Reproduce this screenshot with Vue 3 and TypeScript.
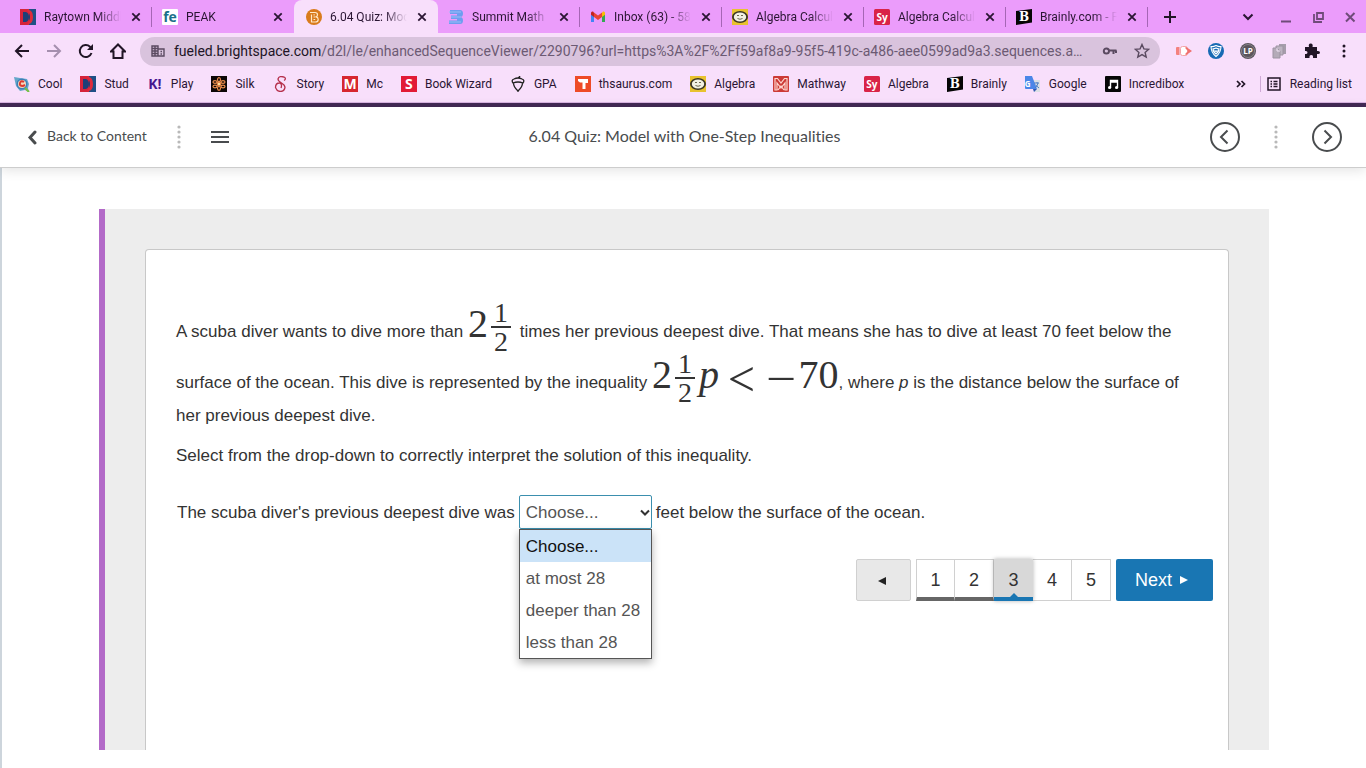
<script setup lang="ts">
import { ref } from 'vue'

interface Link {
  icon: string
  label: string
}

const tabs: Link[] = [
  { icon: 'raytown', label: 'Raytown Middle' },
  { icon: 'peak', label: 'PEAK' },
  { icon: 'beta', label: '6.04 Quiz: Model' },
  { icon: 'summit', label: 'Summit Math' },
  { icon: 'gmail', label: 'Inbox (63) - 58' },
  { icon: 'algebra', label: 'Algebra Calculator' },
  { icon: 'symbolab', label: 'Algebra Calculator' },
  { icon: 'brainly', label: 'Brainly.com - For' },
]
const activeTab = 2

const bookmarks: Link[] = [
  { icon: 'cool', label: 'Cool' },
  { icon: 'raytown', label: 'Stud' },
  { icon: 'kahoot', label: 'Play' },
  { icon: 'silk', label: 'Silk' },
  { icon: 'story', label: 'Story' },
  { icon: 'mc', label: 'Mc' },
  { icon: 'scholastic', label: 'Book Wizard' },
  { icon: 'acorn', label: 'GPA' },
  { icon: 'thesaurus', label: 'thsaurus.com' },
  { icon: 'algebra', label: 'Algebra' },
  { icon: 'mathway', label: 'Mathway' },
  { icon: 'symbolab', label: 'Algebra' },
  { icon: 'brainly', label: 'Brainly' },
  { icon: 'translate', label: 'Google' },
  { icon: 'music', label: 'Incredibox' },
]

const extensions = ['cast', 'shield', 'lp', 'copies', 'puzzle', 'kebab']

const monograms: Record<string, string> = {
  peak: 'fe',
  symbolab: 'Sy',
  brainly: 'B',
  kahoot: 'K!',
  mc: 'M',
  scholastic: 'S',
  translate: 'G',
  lp: 'LP',
}

const options = ['Choose...', 'at most 28', 'deeper than 28', 'less than 28']
const answer = ref(options[0])

const pages = [1, 2, 3, 4, 5]
const currentPage = ref(3)
</script>

<template>
  <div class="screen">
    <svg class="sprite" aria-hidden="true">
      <symbol id="raytown" viewBox="0 0 16 16">
        <rect width="16" height="16" fill="#d5233b" />
        <path d="M9 0h7v16H9z" fill="#1f4f86" />
        <path d="M3 3h3q3 1 3 5t-3 5H3z" fill="#1d3f78" />
        <path d="M7 1h2q4 1 4 7t-4 7H7l2-3V4z" fill="#df2a3c" />
        <path d="M9 4q2 4 0 8z" fill="#1d3f78" />
      </symbol>
      <symbol id="peak" viewBox="0 0 16 16">
        <rect width="16" height="16" rx="1" fill="#fff" />
      </symbol>
      <symbol id="beta" viewBox="0 0 16 16">
        <circle cx="8" cy="8" r="8" fill="#d97b1c" />
        <path d="M4 3.500h5q2.500 0 2.500 2.200 0 1.500-1.300 2.200 2 .5 2 2.500 0 2.600-3 2.600H5.500V5.500M7.500 5.800h1.200M7.500 8h1.500M7.500 10.500h1.700" fill="none" stroke="#ffe9c8" stroke-width="1.200" />
      </symbol>
      <symbol id="summit" viewBox="0 0 16 16">
        <path d="M2 1h10q3 0 3 3.500T12 8q3 0 3 3.500T12 15H1v-3.500h8V10H3V6.500h6V5H2z" fill="#6f9df0" />
        <path d="M1 3h12M3 8h10M1 13h12" stroke="#9abcf8" stroke-width="1" />
      </symbol>
      <symbol id="gmail" viewBox="0 0 16 16">
        <path d="M1 4v9h3V7z" fill="#4285f4" />
        <path d="M12 7v6h3V4z" fill="#34a853" />
        <path d="M1 4q0-2 2-1.500L4 3.500V8L1 5.800z" fill="#c5221f" />
        <path d="M15 4q0-2-2-1.500l-1 1V8l3-2.200z" fill="#fbbc04" />
        <path d="M4 3.500l4 3 4-3V8l-4 3-4-3z" fill="#ea4335" />
      </symbol>
      <symbol id="algebra" viewBox="0 0 16 16">
        <rect width="16" height="16" fill="#e8c22f" />
        <ellipse cx="8" cy="8" rx="8" ry="6" fill="#3a3523" />
        <ellipse cx="8" cy="8" rx="6.200" ry="4.600" fill="#f2f0e2" />
        <path d="M5 6.500h2M9 6.500h2M5.500 9.500q2.500 1.500 5 0" fill="none" stroke="#6d6850" stroke-width="1" />
      </symbol>
      <symbol id="symbolab" viewBox="0 0 16 16">
        <rect width="16" height="16" rx="1.500" fill="#d92347" />
      </symbol>
      <symbol id="brainly" viewBox="0 0 16 16">
        <path d="M0 2L16 0v13.500L0 16z" fill="#050505" />
      </symbol>
      <symbol id="cool" viewBox="0 0 16 16">
        <path d="M0 1l6 1 7 1 2 5-1 4 1 4-4-2-5 1-4-5z" fill="#64a7c9" />
        <circle cx="8" cy="8" r="5.500" fill="#3f7fb8" />
        <circle cx="8" cy="8" r="4" fill="#f3d8be" />
        <path d="M10 6q-3-2-4 1t3 3l2-1" fill="none" stroke="#dd3b30" stroke-width="2" />
        <path d="M11 12l4 4" stroke="#78c043" stroke-width="2" />
      </symbol>
      <symbol id="kahoot" viewBox="0 0 16 16" />
      <symbol id="silk" viewBox="0 0 16 16">
        <rect width="16" height="16" fill="#0d0706" />
        <g fill="none" stroke="#e88a4b" stroke-width="1.200">
          <circle cx="8" cy="8" r="1.800" fill="#ffe0a0" />
          <ellipse cx="8" cy="3.700" rx="1.500" ry="2" />
          <ellipse cx="8" cy="12.300" rx="1.500" ry="2" />
          <ellipse cx="4" cy="6" rx="2" ry="1.300" />
          <ellipse cx="12" cy="6" rx="2" ry="1.300" />
          <ellipse cx="4" cy="10.500" rx="2" ry="1.300" />
          <ellipse cx="12" cy="10.500" rx="2" ry="1.300" />
        </g>
      </symbol>
      <symbol id="story" viewBox="0 0 16 16">
        <path d="M12 1.500Q6-1 5 3q0 2 3.500 4t3.500 4.500Q11 15.500 7.500 15.500T2.500 11.500q0-4.500 4-4.500 3 1 1.500 5M12 1.500q1 2-1 3" fill="none" stroke="#b5304c" stroke-width="1.300" />
      </symbol>
      <symbol id="mc" viewBox="0 0 16 16">
        <rect width="16" height="16" fill="#d7262f" />
      </symbol>
      <symbol id="scholastic" viewBox="0 0 16 16">
        <rect width="16" height="16" fill="#e21b36" />
      </symbol>
      <symbol id="acorn" viewBox="0 0 16 16">
        <path d="M3 7q-2-3 1-4 4-2 8 0 3 1 1 4-5-2-10 0zM3.500 7q0 4 4.500 8 4.500-4 4.500-8M8 2.500L10 0M8 15v1" fill="none" stroke="#222" stroke-width="1.300" />
      </symbol>
      <symbol id="thesaurus" viewBox="0 0 16 16">
        <rect width="16" height="16" fill="#ee4b27" />
        <path d="M3 3h10v4h-2.500v6h-3V6.500H5L3 5z" fill="#fff" />
      </symbol>
      <symbol id="mathway" viewBox="0 0 16 16">
        <rect width="16" height="16" rx="1" fill="#cc3a36" />
        <path d="M2 14V2.500h2.500L8 7l3.500-4.500H14V14h-2V7l-4 5-4-5v7zM5 14l3-4 3 4" fill="none" stroke="#ffd5cf" stroke-width="1.200" />
      </symbol>
      <symbol id="translate" viewBox="0 0 16 16">
        <path d="M6 4h9v12H9z" fill="#dcdfe5" />
        <path d="M0 0h7l5 13H1q-1 0-1-1z" fill="#4a86e8" />
        <path d="M8 13h4l-3 3z" fill="#3058b0" />
        <path d="M9 7h5M12 6v1M13 7q-1 4-3 5M10.500 9l3.500 3" fill="none" stroke="#4a7fc4" stroke-width="1" />
      </symbol>
      <symbol id="music" viewBox="0 0 16 16">
        <rect width="16" height="16" rx="1" fill="#050505" />
        <path d="M5.500 11.500V4.500h7v7M5.500 6h7" fill="none" stroke="#fff" stroke-width="1.400" />
        <circle cx="4.600" cy="11.500" r="1.600" fill="#fff" />
        <circle cx="11.600" cy="11.500" r="1.600" fill="#fff" />
      </symbol>
      <symbol id="cast" viewBox="0 0 16 16">
        <path d="M0 5q0-1 1-1h2.500v8H1q-1 0-1-1z" fill="#f4817e" />
        <rect x="4.500" y="3.500" width="7" height="9" rx="2" fill="#fff" stroke="#f4a5a8" stroke-width="1" />
        <path d="M9.500 3.500L16 8l-6.500 4.500v-2L12 8 9.500 5.500z" fill="#f0716e" />
      </symbol>
      <symbol id="shield" viewBox="0 0 16 16">
        <circle cx="8" cy="8" r="8" fill="#176ab4" />
        <path d="M8 2.500q3 1.500 5 1 0 6-5 10-5-4-5-10 2 .5 5-1zM8 5q2 1 3 .8 0 3.200-3 5.200-3-2-3-5.200Q6 6 8 5zM6.500 7.500l1.500 1 1.500-1" fill="none" stroke="#fff" stroke-width="1.100" />
      </symbol>
      <symbol id="lp" viewBox="0 0 16 16">
        <circle cx="8" cy="8" r="8" fill="#5b555c" />
        <circle cx="8" cy="8" r="6.500" fill="none" stroke="#89838a" stroke-width="1" />
      </symbol>
      <symbol id="copies" viewBox="0 0 16 16">
        <path d="M7 1h7v10H7z" fill="#a69dab" />
        <path d="M4 3h7v9H4z" fill="#bdb4c1" stroke="#9d94a2" />
        <path d="M1 5h4l3 3v7H1z" fill="#b4abb8" stroke="#9d94a2" />
        <path d="M5 5v3h3" fill="none" stroke="#efe3f3" />
      </symbol>
      <symbol id="puzzle" viewBox="0 0 16 16">
        <path d="M1 4h4q-1-3.500 1.700-3.500T8.500 4H13v4q3-.5 3 1.500T13 11v4H9q.5-3-1.700-3T5.500 15H1v-4q2.500.3 2.500-1.600T1 8z" fill="#211526" />
      </symbol>
      <symbol id="kebab" viewBox="0 0 16 16">
        <circle cx="8" cy="3" r="1.500" fill="#211526" />
        <circle cx="8" cy="8" r="1.500" fill="#211526" />
        <circle cx="8" cy="13" r="1.500" fill="#211526" />
      </symbol>
      <symbol id="close" viewBox="0 0 16 16">
        <path d="M4.300 4.300l7.400 7.400M11.700 4.300l-7.400 7.400" stroke="#2a1533" stroke-width="1.800" />
      </symbol>
      <symbol id="dots" viewBox="0 0 4 24">
        <g fill="#b9b9b9">
          <circle cx="2" cy="2" r="1.600" /><circle cx="2" cy="7" r="1.600" /><circle cx="2" cy="12" r="1.600" /><circle cx="2" cy="17" r="1.600" /><circle cx="2" cy="22" r="1.600" />
        </g>
      </symbol>
    </svg>

    <header class="browser">
      <div class="tabstrip">
        <div v-for="(tab, i) in tabs" :key="i" class="tab" :class="{ active: i === activeTab, bare: i === activeTab - 1 || i === activeTab }">
          <span class="badge" :class="tab.icon"><svg class="icon"><use :href="'#' + tab.icon" /></svg><b v-if="monograms[tab.icon]">{{ monograms[tab.icon] }}</b></span>
          <span class="tab-title">{{ tab.label }}</span>
          <button class="plain" type="button" aria-label="Close tab"><svg class="icon"><use href="#close" /></svg></button>
        </div>
        <button class="plain new-tab" type="button" aria-label="New tab">
          <svg class="icon" viewBox="0 0 16 16"><path d="M8 2v12M2 8h12" stroke="#211526" stroke-width="2" /></svg>
        </button>
        <div class="window-controls">
          <button class="plain" type="button" aria-label="Search tabs"><svg class="icon" viewBox="0 0 16 16"><path d="M3.500 5.500L8 10l4.500-4.500" fill="none" stroke="#2a1533" stroke-width="2" /></svg></button>
          <button class="plain" type="button" aria-label="Minimize"><svg class="icon" viewBox="0 0 16 16"><path d="M3 12.500h10" stroke="#6f4b79" stroke-width="2" /></svg></button>
          <button class="plain" type="button" aria-label="Restore"><svg class="icon" viewBox="0 0 16 16"><path d="M7 4h6v6H7zM4 5v8h8" fill="none" stroke="#6f4b79" stroke-width="1.800" /></svg></button>
          <button class="plain" type="button" aria-label="Close"><svg class="icon" viewBox="0 0 16 16"><path d="M4 4l8.500 8.500M12.500 4L4 12.500" stroke="#6f4b79" stroke-width="2" /></svg></button>
        </div>
      </div>

      <div class="toolbar">
        <button class="plain" type="button" aria-label="Back"><svg class="icon" viewBox="0 0 16 16"><path d="M15 8H2M8 2L2 8l6 6" fill="none" stroke="#211526" stroke-width="2" /></svg></button>
        <button class="plain" type="button" aria-label="Forward"><svg class="icon" viewBox="0 0 16 16"><path d="M1 8h13M8 2l6 6-6 6" fill="none" stroke="#a58fae" stroke-width="2" /></svg></button>
        <button class="plain" type="button" aria-label="Reload"><svg class="icon" viewBox="0 0 16 16"><path d="M13.500 10A6 6 0 1 1 12 3.700L13.500 5" fill="none" stroke="#211526" stroke-width="2" /><path d="M15 1v6H9z" fill="#211526" /></svg></button>
        <button class="plain" type="button" aria-label="Home"><svg class="icon" viewBox="0 0 16 16"><path d="M1 8.500L8 1.500l7 7h-2.500V15h-9V8.500z" fill="none" stroke="#211526" stroke-width="2" /></svg></button>
        <div class="address">
          <svg class="icon" viewBox="0 0 16 16"><path d="M2 3h6v10H2zM8 6h6v7H8zM2 5.500h6M2 8h6M2 10.500h6M5 3v10M10.500 8.500h1.500M10.500 11h1.500" fill="none" stroke="#5a4a60" stroke-width="1.400" /></svg>
          <span class="url"><b>fueled.brightspace.com</b>/d2l/le/enhancedSequenceViewer/2290796?url=https%3A%2F%2Ff59af8a9-95f5-419c-a486-aee0599ad9a3.sequences.api.brightspace.com</span>
          <svg class="icon" viewBox="0 0 16 16"><path d="M1.800 8a2.600 2.600 0 1 0 5.200 0 2.600 2.600 0 1 0-5.200 0M7 7.500h7.500M11.500 7.500v3.500M14 7.500V10" fill="none" stroke="#5a4a60" stroke-width="2" /></svg>
          <svg class="icon" viewBox="0 0 16 16"><path d="M8 1.500l1.900 4.400 4.800.4-3.600 3.100 1.100 4.700L8 11.600l-4.200 2.500 1.100-4.700L1.300 6.300l4.800-.4z" fill="none" stroke="#5a4a60" stroke-width="1.400" /></svg>
        </div>
        <div class="extensions">
          <button v-for="name in extensions" :key="name" class="plain" type="button" :aria-label="name"><span class="badge" :class="name"><svg class="icon"><use :href="'#' + name" /></svg><b v-if="monograms[name]">{{ monograms[name] }}</b></span></button>
        </div>
      </div>

      <nav class="bookmarks" aria-label="Bookmarks">
        <a v-for="(mark, i) in bookmarks" :key="i" href="#"><span class="badge" :class="mark.icon"><svg class="icon"><use :href="'#' + mark.icon" /></svg><b v-if="monograms[mark.icon]">{{ monograms[mark.icon] }}</b></span>{{ mark.label }}</a>
        <button class="plain more" type="button" aria-label="More bookmarks"><svg class="icon" viewBox="0 0 16 16"><path d="M4 5l3 3-3 3M8.500 5l3 3-3 3" fill="none" stroke="#211526" stroke-width="1.700" /></svg></button>
        <a class="reading" href="#"><svg class="icon" viewBox="0 0 16 16"><path d="M2 2h12v12H2zM4.500 5.500H6M4.500 8H6M4.500 10.500H6M7.500 5.500h4M7.500 8h4M7.500 10.500h4" fill="none" stroke="#211526" stroke-width="1.500" /></svg>Reading list</a>
      </nav>
    </header>

    <header class="course-bar">
      <div class="side">
        <a class="back" href="#">
          <svg width="10" height="16" viewBox="0 0 10 16"><path d="M8 3L3 8.500 8 14" fill="none" stroke="#494c4e" stroke-width="3" stroke-linecap="round" /></svg>
          <span>Back to Content</span>
        </a>
        <svg class="dots"><use href="#dots" /></svg>
        <button class="plain" type="button" aria-label="Table of contents">
          <svg class="lines" viewBox="0 0 18 14"><path d="M0 2h18M0 7h18M0 12h18" stroke="#494c4e" stroke-width="2" /></svg>
        </button>
      </div>
      <h1>6.04 Quiz: Model with One-Step Inequalities</h1>
      <div class="side end">
        <button class="plain" type="button" aria-label="Previous"><svg class="round" viewBox="0 0 30 30"><path d="M1 15a14 14 0 1 0 28 0 14 14 0 1 0-28 0M17.500 8.500L11 15l6.500 6.500" fill="none" stroke="#494c4e" stroke-width="2" /></svg></button>
        <svg class="dots"><use href="#dots" /></svg>
        <button class="plain" type="button" aria-label="Next"><svg class="round" viewBox="0 0 30 30"><path d="M1 15a14 14 0 1 0 28 0 14 14 0 1 0-28 0M12.500 8.500L19 15l-6.500 6.500" fill="none" stroke="#494c4e" stroke-width="2" /></svg></button>
      </div>
    </header>

    <main class="viewer">
      <div class="frame">
        <section class="card">
          <p>
            A scuba diver wants to dive more than
            <span class="math"><span>2</span><span class="frac"><span>1</span><span class="den">2</span></span></span>
            times her previous deepest dive. That means she has to dive at least 70 feet below the surface of the ocean. This dive is represented by the inequality
            <span class="math"><span>2</span><span class="frac"><span>1</span><span class="den">2</span></span><i>p</i><span class="rel">&lt;</span><span class="minus">−</span><span>70</span></span>, where <i>p</i> is the distance below the surface of her previous deepest dive.
          </p>
          <p>Select from the drop-down to correctly interpret the solution of this inequality.</p>
          <div class="answer">
            <label for="depth">The scuba diver's previous deepest dive was</label>
            <div class="picker">
              <select id="depth" v-model="answer">
                <option v-for="o in options" :key="o">{{ o }}</option>
              </select>
              <svg class="chevron" width="10" height="8" viewBox="0 0 10 8"><path d="M1 1.500l4 4 4-4" fill="none" stroke="#333" stroke-width="2" /></svg>
              <ul class="menu" role="listbox" aria-label="Depth">
                <li v-for="o in options" :key="o" role="option" :aria-selected="o === answer" :class="{ chosen: o === answer }" @click="answer = o">{{ o }}</li>
              </ul>
            </div>
            <span>feet below the surface of the ocean.</span>
          </div>
          <nav class="pager" aria-label="Questions">
            <button class="prev" type="button" aria-label="Previous question"><svg width="8" height="8" viewBox="0 0 8 8"><path d="M8 0v8L0 4z" fill="#222" /></svg></button>
            <div class="pages">
              <button v-for="n in pages" :key="n" type="button" :class="{ done: n < currentPage, current: n === currentPage }" @click="currentPage = n">{{ n }}</button>
            </div>
            <button class="next" type="button">Next <svg width="8" height="8" viewBox="0 0 8 8"><path d="M0 0v8l8-4z" fill="#fff" /></svg></button>
          </nav>
        </section>
      </div>
    </main>
  </div>
</template>

<style>
body {
  margin: 0;
}
</style>

<style scoped>
.screen {
  display: flex;
  flex-direction: column;
  height: 100vh;
  overflow: hidden;
  background: #fff;
  font-family: Roboto, sans-serif;
  font-size: 12px;
  color: #2a1533;
}
.sprite {
  position: absolute;
  width: 0;
  height: 0;
}
.icon {
  display: block;
  flex: none;
  width: 16px;
  height: 16px;
}
.badge {
  display: grid;
  flex: none;
  place-items: center;
  width: 16px;
  height: 16px;
}
.badge > * {
  grid-area: 1 / 1;
}
.badge b {
  z-index: 1;
  font-family: "Open Sans", sans-serif;
  font-size: 10px;
  font-weight: 700;
  line-height: 16px;
  color: #fff;
}
.badge.peak b {
  font-size: 14px;
  color: #1b6f8a;
}
.badge.brainly b {
  font-family: "DejaVu Serif", serif;
  font-size: 12px;
}
.badge.kahoot b {
  font-size: 14px;
  color: #46178f;
}
.badge.mc b,
.badge.scholastic b {
  font-size: 14px;
}
.badge.translate b {
  justify-self: start;
  font-size: 8px;
  line-height: 12px;
}
.badge.lp b {
  font-size: 8px;
}
.plain {
  display: block;
  padding: 0;
  border: 0;
  background: none;
}
a {
  color: inherit;
  text-decoration: none;
}
.browser {
  flex: none;
  background: #f8dffb;
  border-bottom: 4px solid #432a55;
}
.tabstrip {
  display: flex;
  align-items: center;
  height: 33px;
  padding-left: 10px;
  background: #eb9cfb;
}
.tab {
  display: flex;
  flex: 0 1 142px;
  align-items: center;
  box-sizing: border-box;
  min-width: 0;
  height: 20px;
  padding: 0 7px 0 10px;
  border-right: 1px solid #a566b5;
}
.tab.bare {
  border-color: transparent;
}
.tab.active {
  flex-basis: 144px;
  height: 33px;
  padding-left: 12px;
  border-radius: 8px 8px 0 0;
  background: #f8dffb;
}
.tab-title {
  flex: 1;
  min-width: 0;
  margin: 0 7px 0 8px;
  overflow: hidden;
  white-space: nowrap;
  mask-image: linear-gradient(to right, #000 70%, transparent);
}
.new-tab {
  margin-left: 14px;
}
.window-controls {
  display: flex;
  gap: 16px;
  margin-left: auto;
  padding-right: 8px;
}
.window-controls button:first-child {
  margin-right: 6px;
}
.toolbar {
  display: flex;
  align-items: center;
  gap: 16px;
  height: 36px;
  padding: 0 14px;
}
.address {
  display: flex;
  flex: 1;
  align-items: center;
  gap: 16px;
  min-width: 0;
  height: 29px;
  margin-left: -2px;
  padding: 0 10px;
  border-radius: 15px;
  background: #d9c3dd;
}
.address .icon:first-child {
  margin-right: -8px;
}
.url {
  flex: 1;
  overflow: hidden;
  font-size: 14px;
  color: #6c5a73;
  white-space: nowrap;
  text-overflow: ellipsis;
}
.url b {
  font-weight: 400;
  color: #211526;
}
.extensions {
  display: flex;
  gap: 16px;
}
.bookmarks {
  display: flex;
  align-items: center;
  box-sizing: border-box;
  gap: 18px;
  height: 34px;
  padding: 0 14px 4px;
  border-bottom: 1px solid #d9b4e2;
  white-space: nowrap;
}
.bookmarks a {
  display: flex;
  align-items: center;
  gap: 8px;
}
.more {
  margin-left: auto;
}
.bookmarks .reading {
  margin-left: -7px;
  padding-left: 5px;
  border-left: 1px solid #cfa9d6;
}
.course-bar {
  display: flex;
  z-index: 1;
  flex: none;
  align-items: center;
  height: 60px;
  padding: 0 24px 0 27px;
  border-bottom: 1px solid #cdcdcd;
  background: #fff;
  box-shadow: 0 2px 12px rgba(0, 0, 0, 0.12);
  font-family: Lato, sans-serif;
  font-size: 14px;
  font-variant-ligatures: none;
  color: #494c4e;
}
.course-bar h1,
.back span {
  margin: 0;
  padding-bottom: 3px;
}
.course-bar h1 {
  font-size: 16px;
  font-weight: 400;
}
.side {
  display: flex;
  flex: 1;
  align-items: center;
  gap: 30px;
}
.side.end {
  justify-content: flex-end;
  gap: 34px;
}
.back {
  display: flex;
  align-items: center;
  gap: 10px;
}
.dots {
  width: 4px;
  height: 24px;
}
.lines {
  display: block;
  width: 18px;
  height: 14px;
}
.round {
  display: block;
  width: 30px;
  height: 30px;
}
.viewer {
  display: flex;
  flex: 1;
  min-height: 0;
  padding: 41px 97px 18px;
  border-left: 2px solid #cdd5dc;
}
.frame {
  flex: 1;
  padding: 40px 40px 0;
  overflow: hidden;
  border-left: 6px solid #b36ac8;
  background: #ededed;
}
.card {
  box-sizing: border-box;
  height: 100%;
  padding: 50px 30px 0;
  border: 1px solid #c8c8c8;
  border-bottom: 0;
  border-radius: 4px 4px 0 0;
  background: #fff;
  font-family: "Liberation Sans", Arial, sans-serif;
  font-size: 17px;
  line-height: 28px;
  color: #333;
}
.card p {
  margin: 0 0 12px;
}
.math {
  font-family: "Liberation Serif", serif;
  font-size: 40px;
  line-height: 36px;
  white-space: nowrap;
}
.frac {
  display: inline-flex;
  flex-direction: column;
  width: 20px;
  height: 51px;
  margin: 0 4px 0 3px;
  vertical-align: 15px;
  font-size: 28px;
  line-height: 26px;
  text-align: center;
}
.den {
  height: 23px;
  border-top: 2px solid #333;
  line-height: 28px;
}
.rel,
.minus {
  font-family: Lato, sans-serif;
  font-size: 60px;
  font-weight: 300;
  line-height: 0;
  vertical-align: -11px;
}
.rel {
  margin: 0 4px 0 6px;
}
.answer {
  display: flex;
  align-items: center;
  gap: 4px;
  margin-top: 25px;
  padding-left: 1px;
}
.answer > label,
.answer > span {
  padding-top: 2px;
}
.picker {
  position: relative;
}
select {
  display: block;
  box-sizing: border-box;
  width: 133px;
  height: 34px;
  padding: 2px 6px 0;
  border: 1px solid #3b8fae;
  border-radius: 2px;
  outline: 0;
  appearance: none;
  background: #fff;
  font: inherit;
  color: #555;
}
.chevron {
  position: absolute;
  top: 14px;
  right: 2px;
}
.menu {
  position: absolute;
  top: 100%;
  left: 0;
  right: 0;
  margin: 0;
  padding: 0;
  border: 1px solid #555;
  background: #fff;
  box-shadow: 0 4px 8px rgba(0, 0, 0, 0.3);
  list-style: none;
  line-height: 30px;
  color: #555;
}
.menu li {
  padding: 2px 6px 0;
}
.menu .chosen {
  background: #cbe3f8;
  color: #111;
}
.pager {
  display: flex;
  justify-content: flex-end;
  gap: 5px;
  margin: 30px -15px 0 0;
}
.pager button {
  height: 42px;
  padding: 0;
  border: 1px solid #d0d0d0;
  background: #fff;
  font: inherit;
  font-size: 18px;
  color: #333;
}
.pager .prev {
  width: 55px;
  padding: 0 4px 3px 0;
  border-radius: 2px;
  background: #e8e8e8;
}
.pages {
  display: flex;
}
.pages button {
  width: 39px;
}
.pages button + button {
  border-left: 0;
}
.pages .done {
  border-bottom: 4px solid #666;
  padding-top: 3px;
}
.pages .current {
  position: relative;
  padding-top: 3px;
  border: 0;
  border-bottom: 4px solid #1976b3;
  background: #d8d8d8;
  box-shadow: 0 0 4px rgba(0, 0, 0, 0.3);
}
.pages .current::after {
  position: absolute;
  bottom: 0;
  left: 50%;
  margin-left: -4px;
  border: 4px solid transparent;
  border-top: 0;
  border-bottom-color: #1976b3;
  content: "";
}
.pager .next {
  width: 97px;
  padding-right: 6px;
  border: 0;
  border-radius: 2px;
  background: #1976b3;
  color: #fff;
}
.next svg {
  margin-left: 3px;
  vertical-align: 2px;
}
</style>
